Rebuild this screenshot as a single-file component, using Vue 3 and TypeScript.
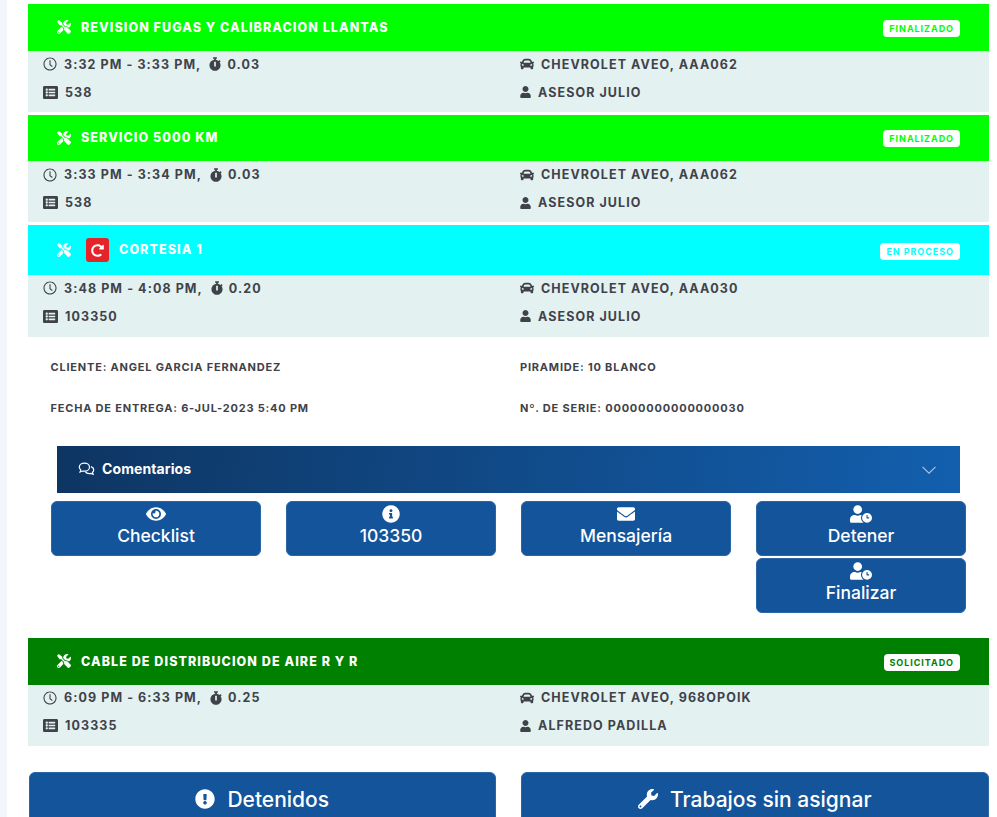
<script setup lang="ts">
import { h } from 'vue'
import type { FunctionalComponent } from 'vue'

const icons: Record<string, [string, string]> = {
  tools: ['0 0 512 512', 'M501.1 395.7L384 278.6c-23.1-23.1-57.6-27.6-85.4-13.9L192 158.1V96L64 0 0 64l96 128h62.1l106.6 106.6c-13.6 27.8-9.2 62.3 13.9 85.4l117.1 117.1c14.6 14.6 38.2 14.6 52.7 0l52.7-52.7c14.5-14.6 14.5-38.2 0-52.7zM331.7 225c28.3 0 54.9 11 74.9 31l19.4 19.4c15.8-6.9 30.8-16.5 43.8-29.5 37.1-37.1 49.7-89.3 37.9-136.7-2.2-9-13.5-12.1-20.1-5.5l-74.4 74.4-67.9-11.3L334 98.9l74.4-74.4c6.6-6.6 3.4-17.9-5.7-20.2-47.4-11.7-99.6.9-136.6 37.9-28.5 28.5-41.9 66.1-41.2 103.6l82.1 82.1c8.1-1.9 16.5-2.9 24.7-2.9zm-103.9 82l-56.7-56.7L18.7 402.8c-25 25-25 65.5 0 90.5s65.5 25 90.5 0l123.6-123.6c-7.6-19.9-9.9-41.6-5-62.7zM64 472c-13.2 0-24-10.8-24-24 0-13.3 10.7-24 24-24s24 10.7 24 24c0 13.2-10.7 24-24 24z'],
  clock: ['0 0 512 512', 'M256 16C123 16 16 123 16 256s107 240 240 240 240-107 240-240S389 16 256 16zm0 440c-110.5 0-200-89.5-200-200S145.5 56 256 56s200 89.5 200 200-89.5 200-200 200zm74-92l-94-68V116h40v160l78 56z'],
  stopwatch: ['0 0 448 512', 'M432 304c0 114.9-93.1 208-208 208S16 418.9 16 304c0-104 76.3-190.2 176-205.5V64h-28c-6.6 0-12-5.4-12-12V12c0-6.6 5.4-12 12-12h120c6.6 0 12 5.4 12 12v40c0 6.6-5.4 12-12 12h-28v34.5c37.5 5.8 71.7 21.6 99.7 44.6l27.5-27.5c4.7-4.7 12.3-4.7 17 0l28.3 28.3c4.7 4.7 4.7 12.3 0 17l-29.4 29.4-.6.6C419.7 223.3 432 262.2 432 304zm-176 36V188.5c0-6.6-5.4-12-12-12h-40c-6.6 0-12 5.4-12 12V340c0 6.6 5.4 12 12 12h40c6.6 0 12-5.4 12-12z'],
  list: ['0 0 512 512', 'M464 480H48c-26.51 0-48-21.49-48-48V80c0-26.51 21.49-48 48-48h416c26.51 0 48 21.49 48 48v352c0 26.51-21.49 48-48 48zM128 120c-22.091 0-40 17.909-40 40s17.909 40 40 40 40-17.909 40-40-17.909-40-40-40zm0 96c-22.091 0-40 17.909-40 40s17.909 40 40 40 40-17.909 40-40-17.909-40-40-40zm0 96c-22.091 0-40 17.909-40 40s17.909 40 40 40 40-17.909 40-40-17.909-40-40-40zm288-136v-32c0-6.627-5.373-12-12-12H204c-6.627 0-12 5.373-12 12v32c0 6.627 5.373 12 12 12h200c6.627 0 12-5.373 12-12zm0 96v-32c0-6.627-5.373-12-12-12H204c-6.627 0-12 5.373-12 12v32c0 6.627 5.373 12 12 12h200c6.627 0 12-5.373 12-12zm0 96v-32c0-6.627-5.373-12-12-12H204c-6.627 0-12 5.373-12 12v32c0 6.627 5.373 12 12 12h200c6.627 0 12-5.373 12-12z'],
  car: ['0 0 512 512', 'M499.99 176h-59.87l-16.64-41.6C406.38 91.63 365.57 64 319.5 64h-127c-46.06 0-86.88 27.63-103.99 70.4L71.87 176H12.01C4.2 176-1.53 183.34.37 190.91l6 24C7.7 220.25 12.5 224 18.01 224h20.07C24.65 235.73 16 252.78 16 272v48c0 16.12 6.16 30.67 16 41.93V416c0 17.67 14.33 32 32 32h32c17.67 0 32-14.33 32-32v-32h256v32c0 17.67 14.33 32 32 32h32c17.67 0 32-14.33 32-32v-54.07c9.84-11.25 16-25.8 16-41.93v-48c0-19.22-8.65-36.27-22.07-48H494c5.51 0 10.31-3.75 11.64-9.09l6-24c1.89-7.57-3.84-14.91-11.65-14.91zm-352.06-17.83c7.29-18.22 24.94-30.17 44.57-30.17h127c19.63 0 37.28 11.95 44.57 30.17L384 208H128l19.93-49.83zM96 319.8c-19.2 0-32-12.76-32-31.9S76.8 256 96 256s48 28.71 48 47.85-28.8 15.95-48 15.95zm320 0c-19.2 0-48 3.19-48-15.95S396.8 256 416 256s32 12.76 32 31.9-12.8 31.9-32 31.9z'],
  user: ['0 0 448 512', 'M224 256c70.7 0 128-57.3 128-128S294.7 0 224 0 96 57.3 96 128s57.3 128 128 128zm89.6 32h-16.7c-22.2 10.2-46.9 16-72.9 16s-50.6-5.8-72.9-16h-16.7C60.2 288 0 348.2 0 422.4V464c0 26.5 21.5 48 48 48h352c26.5 0 48-21.5 48-48v-41.6c0-74.2-60.2-134.4-134.4-134.4z'],
  redo: ['0 0 512 512', 'M256.455 8c66.269.119 126.437 26.233 170.859 68.685l35.715-35.715C478.149 25.851 504 36.559 504 57.941V192c0 13.255-10.745 24-24 24H345.941c-21.382 0-32.09-25.851-16.971-40.971l41.75-41.75c-30.864-28.899-70.801-44.907-113.23-45.273-92.398-.798-170.283 73.977-169.484 169.442C88.764 348.009 162.184 424 256 424c41.127 0 79.997-14.678 110.629-41.556 4.743-4.161 11.906-3.908 16.368.553l39.662 39.662c4.872 4.872 4.631 12.815-.482 17.433C378.202 479.813 319.926 504 256 504 119.034 504 8.001 392.967 8 256.002 7.999 119.193 119.646 7.755 256.455 8z'],
  eye: ['0 0 576 512', 'M572.52 241.4C518.29 135.59 410.93 64 288 64S57.68 135.64 3.48 241.41a32.35 32.35 0 0 0 0 29.19C57.71 376.41 165.07 448 288 448s230.32-71.64 284.52-177.41a32.35 32.35 0 0 0 0-29.19zM288 400a144 144 0 1 1 144-144 143.93 143.93 0 0 1-144 144zm0-240a95.31 95.31 0 0 0-25.31 3.79 47.85 47.85 0 0 1-66.9 66.9A95.78 95.78 0 1 0 288 160z'],
  info: ['0 0 512 512', 'M256 8C119.043 8 8 119.083 8 256c0 136.997 111.043 248 248 248s248-111.003 248-248C504 119.083 392.957 8 256 8zm0 110c23.196 0 42 18.804 42 42s-18.804 42-42 42-42-18.804-42-42 18.804-42 42-42zm56 254c0 6.627-5.373 12-12 12h-88c-6.627 0-12-5.373-12-12v-24c0-6.627 5.373-12 12-12h12v-64h-12c-6.627 0-12-5.373-12-12v-24c0-6.627 5.373-12 12-12h64c6.627 0 12 5.373 12 12v100h12c6.627 0 12 5.373 12 12v24z'],
  envelope: ['0 0 512 512', 'M502.3 190.8c3.9-3.1 9.7-.2 9.7 4.7V400c0 26.5-21.5 48-48 48H48c-26.5 0-48-21.5-48-48V195.6c0-5 5.7-7.8 9.7-4.7 22.4 17.4 52.1 39.5 154.1 113.6 21.1 15.4 56.7 47.8 92.2 47.6 35.7.3 72-32.8 92.3-47.6 102-74.1 131.6-96.3 154-113.7zM256 320c23.2.4 56.6-29.2 73.4-41.4 132.7-96.3 142.8-104.7 173.4-128.7 5.8-4.5 9.2-11.5 9.2-18.9v-19c0-26.5-21.5-48-48-48H48C21.5 64 0 85.5 0 112v19c0 7.4 3.4 14.3 9.2 18.9 30.6 23.9 40.7 32.4 173.4 128.7 16.8 12.2 50.2 41.8 73.4 41.4z'],
  userClock: ['0 0 640 512', 'M496 224c-79.6 0-144 64.4-144 144s64.4 144 144 144 144-64.4 144-144-64.4-144-144-144zm64 150.3c0 5.3-4.4 9.7-9.7 9.7h-60.6c-5.3 0-9.7-4.4-9.7-9.7v-76.6c0-5.3 4.4-9.7 9.7-9.7h12.6c5.3 0 9.7 4.4 9.7 9.7V352h38.3c5.3 0 9.7 4.4 9.7 9.7v12.6zM320 368c0-27.8 6.7-54.1 18.2-77.5-8-1.5-16.2-2.5-24.6-2.5h-16.7c-22.2 10.2-46.9 16-72.9 16s-50.6-5.8-72.9-16h-16.7C60.2 288 0 348.2 0 422.4V464c0 26.5 21.5 48 48 48h347.1c-45.3-31.9-75.1-84.5-75.1-144zm-96-112c70.7 0 128-57.3 128-128S294.7 0 224 0 96 57.3 96 128s57.3 128 128 128z'],
  alert: ['0 0 512 512', 'M504 256c0 136.997-111.043 248-248 248S8 392.997 8 256C8 119.083 119.043 8 256 8s248 111.083 248 248zm-248 50c-25.405 0-46 20.595-46 46s20.595 46 46 46 46-20.595 46-46-20.595-46-46-46zm-43.673-165.346l7.418 136c.347 6.364 5.609 11.346 11.982 11.346h48.546c6.373 0 11.635-4.982 11.982-11.346l7.418-136c.375-6.874-5.098-12.654-11.982-12.654h-63.383c-6.884 0-12.356 5.78-11.981 12.654z'],
  wrench: ['0 0 512 512', 'M507.73 109.1c-2.24-9.03-13.54-12.09-20.12-5.51l-74.36 74.36-67.88-11.31-11.31-67.88 74.36-74.36c6.62-6.62 3.43-17.9-5.66-20.16-47.38-11.74-99.55.91-136.58 37.93-39.64 39.64-50.55 97.1-34.05 147.2L18.74 402.76c-24.99 24.99-24.99 65.51 0 90.5 24.99 24.99 65.51 24.99 90.5 0l213.21-213.21c50.12 16.71 107.47 5.68 147.37-34.22 37.07-37.07 49.7-89.32 37.91-136.73zM64 472c-13.25 0-24-10.75-24-24 0-13.26 10.75-24 24-24s24 10.74 24 24c0 13.25-10.75 24-24 24z'],
}

const Icon: FunctionalComponent<{ name: string }> = (props) =>
  h('svg', { viewBox: icons[props.name][0], fill: 'currentColor', 'aria-hidden': 'true' }, [
    h('path', { d: icons[props.name][1] }),
  ])
Icon.props = ['name']

interface Job {
  title: string
  status: string
  tone: 'lime' | 'cyan' | 'green'
  time: string
  duration: string
  vehicle: string
  order: string
  advisor: string
  courtesy?: boolean
  open?: boolean
}

const jobs: Job[] = [
  { title: 'REVISION FUGAS Y CALIBRACION LLANTAS', status: 'FINALIZADO', tone: 'lime', time: '3:32 PM - 3:33 PM,', duration: '0.03', vehicle: 'CHEVROLET AVEO, AAA062', order: '538', advisor: 'ASESOR JULIO' },
  { title: 'SERVICIO 5000 KM', status: 'FINALIZADO', tone: 'lime', time: '3:33 PM - 3:34 PM,', duration: '0.03', vehicle: 'CHEVROLET AVEO, AAA062', order: '538', advisor: 'ASESOR JULIO' },
  { title: 'CORTESIA 1', status: 'EN PROCESO', tone: 'cyan', time: '3:48 PM - 4:08 PM,', duration: '0.20', vehicle: 'CHEVROLET AVEO, AAA030', order: '103350', advisor: 'ASESOR JULIO', courtesy: true, open: true },
  { title: 'CABLE DE DISTRIBUCION DE AIRE R Y R', status: 'SOLICITADO', tone: 'green', time: '6:09 PM - 6:33 PM,', duration: '0.25', vehicle: 'CHEVROLET AVEO, 968OPOIK', order: '103335', advisor: 'ALFREDO PADILLA' },
]

const details = [
  'CLIENTE: ANGEL GARCIA FERNANDEZ',
  'PIRAMIDE: 10 BLANCO',
  'FECHA DE ENTREGA: 6-JUL-2023 5:40 PM',
  'Nº. DE SERIE: 00000000000000030',
]

const actions = [
  { icon: 'eye', label: 'Checklist', cls: 'ic-eye' },
  { icon: 'info', label: '103350', cls: 'ic-info' },
  { icon: 'envelope', label: 'Mensajería', cls: 'ic-env' },
]
const stopActions = ['Detener', 'Finalizar']
</script>

<template>
  <div class="page">
    <main class="content">
      <section v-for="job in jobs" :key="job.title + job.order" class="job">
        <header class="job-head" :class="[job.tone, { tall: job.courtesy }]">
          <Icon name="tools" class="ic-tools" />
          <span v-if="job.courtesy" class="courtesy"><Icon name="redo" class="ic-redo" /></span>
          <span class="job-title">{{ job.title }}</span>
          <span class="badge">{{ job.status }}</span>
        </header>
        <div class="job-info">
          <div class="cell cell-left">
            <Icon name="clock" class="ic-clock" />
            <span class="t-time">{{ job.time }}</span>
            <Icon name="stopwatch" class="ic-watch" />
            <span>{{ job.duration }}</span>
          </div>
          <div class="cell cell-right">
            <Icon name="car" class="ic-car" />
            <span>{{ job.vehicle }}</span>
          </div>
          <div class="cell cell-left">
            <Icon name="list" class="ic-list" />
            <span>{{ job.order }}</span>
          </div>
          <div class="cell cell-right">
            <Icon name="user" class="ic-user" />
            <span>{{ job.advisor }}</span>
          </div>
        </div>

        <div v-if="job.open" class="job-detail">
          <div class="detail-grid">
            <span v-for="d in details" :key="d">{{ d }}</span>
          </div>
          <div class="accordion">
            <svg class="ic-chat" viewBox="0 0 18 16" fill="none" stroke="currentColor" stroke-width="1.25">
              <path d="M6.8 1.2c-3 0-5.5 1.8-5.5 4.2 0 1.2.6 2.2 1.6 3L2.1 10.6l2.7-1c.6.2 1.3.2 2 .2 3 0 5.400-1.900 5.400-4.300S9.800 1.200 6.800 1.200z" />
              <path d="M13.700 4.900c1.800.6 3 1.900 3 3.500 0 1-.5 1.900-1.300 2.600l.7 2.100-2.500-.9c-.5.1-1 .2-1.600.2-1.900 0-3.500-.8-4.300-2.100" />
            </svg>
            <span class="acc-title">Comentarios</span>
            <svg class="ic-chev" viewBox="0 0 16 10" fill="none" stroke="currentColor" stroke-width="1.1">
              <path d="M1.500 1.800 8 8.200l6.500-6.400" />
            </svg>
          </div>
          <div class="actions">
            <button v-for="a in actions" :key="a.label" class="btn" type="button">
              <Icon :name="a.icon" :class="a.cls" />
              <span>{{ a.label }}</span>
            </button>
            <div class="btn-stack">
              <button v-for="label in stopActions" :key="label" class="btn" type="button">
                <Icon name="userClock" class="ic-uc" />
                <span>{{ label }}</span>
              </button>
            </div>
          </div>
        </div>
      </section>

      <div class="bottom">
        <button class="big" type="button"><Icon name="alert" class="ic-big" /><span>Detenidos</span></button>
        <button class="big" type="button"><Icon name="wrench" class="ic-big" /><span>Trabajos sin asignar</span></button>
      </div>
    </main>
  </div>
</template>

<style>
html, body { margin: 0; background: #fff; }
</style>

<style scoped>
.page {
  height: 817px;
  overflow: hidden;
  box-sizing: border-box;
  padding: 4px 8px 0 28px;
  background: linear-gradient(to right, #f2f6fa 7px, #fff 7px);
  font-family: Inter, "Noto Sans", "Liberation Sans", sans-serif;
}
.content { width: 961px; }
.job { margin-bottom: 3px; }
.job-head {
  display: flex;
  align-items: center;
  height: 46.5px;
  padding: 0 29px;
  color: #fff;
  box-sizing: border-box;
}
.job-head.tall { height: 50px; }
.lime { background: #00ff00; --tone: #00ff00; }
.cyan { background: #00ffff; --tone: #00ffff; }
.green { background: #008000; --tone: #008000; }
.ic-tools { width: 14px; height: 14px; flex: none; margin-right: 10px; }
.courtesy {
  display: flex;
  align-items: center;
  justify-content: center;
  width: 23px;
  height: 24px;
  margin: 0 10px 0 5px;
  border-radius: 3px;
  background: #e3252a;
  flex: none;
}
.ic-redo { width: 13px; height: 13px; }
.job-title {
  flex: 1;
  font-size: 12.5px;
  font-weight: 800;
  letter-spacing: 1.08px;
}
.tall .job-title { margin-bottom: 2px; }
.badge {
  padding: 0 6px;
  height: 17px;
  margin-top: 2px;
  line-height: 17px;
  border-radius: 4px;
  background: #fff;
  color: var(--tone);
  font-size: 9px;
  font-weight: 700;
  letter-spacing: 0.95px;
}
.job-info {
  display: grid;
  grid-template-columns: 492px 1fr;
  grid-auto-rows: 26px;
  align-content: start;
  row-gap: 2px;
  height: 61px;
  padding-top: 0.5px;
  box-sizing: border-box;
  background: #e3f1f1;
  color: #40424a;
  font-size: 12.5px;
  font-weight: 700;
  letter-spacing: 1.08px;
}
.tall + .job-info { height: 62px; padding-top: 0; }
.job:last-of-type .job-info { padding-top: 0; }
.cell { display: flex; align-items: center; height: 26px; }
.cell-left { padding-left: 15px; }
.ic-clock { width: 14px; height: 14px; margin-right: 7px; }
.t-time { margin-right: 8px; }
.ic-watch { width: 12px; height: 14px; margin-right: 6px; }
.ic-list { width: 15px; height: 15px; margin-right: 7px; }
.ic-car { width: 14px; height: 14px; margin-right: 7px; }
.ic-user { width: 11px; height: 12px; margin-right: 7px; }
.job-detail { height: 298px; }
.detail-grid {
  display: grid;
  grid-template-columns: 469.5px 1fr;
  grid-auto-rows: 41px;
  padding: 9px 0 0 22.5px;
  height: 100px;
  align-items: center;
  color: #40424a;
  font-size: 11px;
  font-weight: 700;
  letter-spacing: 0.8px;
}
.accordion {
  display: flex;
  align-items: center;
  height: 47px;
  margin: 0 29px;
  padding: 0 23px 0 21px;
  box-sizing: border-box;
  color: #fff;
  background: linear-gradient(100deg, #0e3562, #135fae);
}
.ic-chat { width: 17px; height: 15px; margin-right: 7px; }
.acc-title { flex: 1; font-size: 14px; font-weight: 700; margin-bottom: 2px; letter-spacing: 0.1px; }
.ic-chev { width: 16px; height: 10px; opacity: .65; }
.actions {
  display: grid;
  grid-template-columns: repeat(4, 210px);
  column-gap: 25px;
  margin: 8px 0 0 23px;
  align-items: start;
}
.btn-stack { display: flex; flex-direction: column; gap: 2px; }
.btn {
  display: flex;
  flex-direction: column;
  align-items: center;
  justify-content: flex-start;
  height: 55px;
  padding: 3px 0 0;
  box-sizing: border-box;
  border: 1px solid #2c65a6;
  border-radius: 6px;
  background: #13549b;
  color: #fff;
  font-family: inherit;
  font-size: 17.5px;
  font-weight: 500;
  line-height: 26px;
}
.btn svg { flex: none; }
.ic-eye { width: 20px; height: 18px; }
.ic-info { width: 18px; height: 18px; }
.ic-env { width: 18px; height: 18px; }
.ic-uc { width: 22px; height: 18px; }
.bottom {
  display: grid;
  grid-template-columns: 467.5px 467.5px;
  column-gap: 25px;
  margin: 26px 0 0 0.5px;
}
.big {
  display: flex;
  align-items: center;
  justify-content: center;
  gap: 12px;
  height: 55px;
  border: 1px solid #2c65a6;
  border-radius: 6px;
  background: #13549b;
  color: #fff;
  font-family: inherit;
  font-size: 21px;
  font-weight: 500;
}
.ic-big { width: 20px; height: 20px; }
</style>
